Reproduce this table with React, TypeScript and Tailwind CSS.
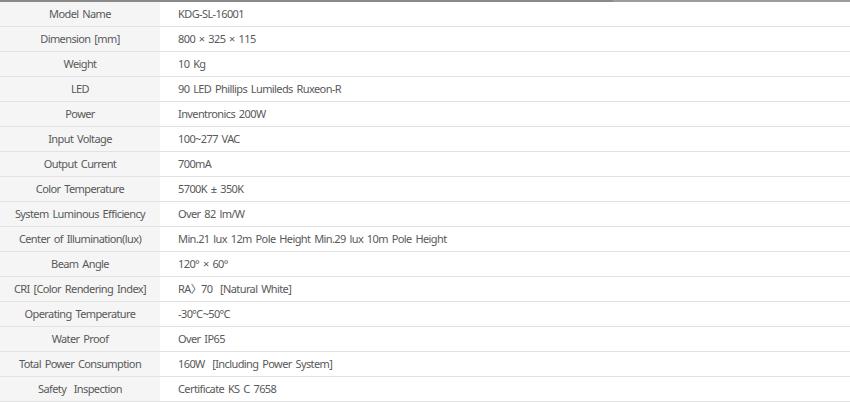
const specs: [string, string][] = [
  ['Model Name', 'KDG-SL-16001'],
  ['Dimension [mm]', '800 × 325 × 115'],
  ['Weight', '10 Kg'],
  ['LED', '90 LED Phillips Lumileds Ruxeon-R'],
  ['Power', 'Inventronics 200W'],
  ['Input Voltage', '100~277 VAC'],
  ['Output Current', '700mA'],
  ['Color Temperature', '5700K ± 350K'],
  ['System Luminous Efficiency', 'Over 82 lm/W'],
  ['Center of Illumination(lux)', 'Min.21 lux 12m Pole Height Min.29 lux 10m Pole Height'],
  ['Beam Angle', '120° × 60°'],
  ['CRI [Color Rendering Index]', 'RA〉70  [Natural White]'],
  ['Operating Temperature', '-30℃~50℃'],
  ['Water Proof', 'Over IP65'],
  ['Total Power Consumption', '160W  [Including Power System]'],
  ['Safety  Inspection', 'Certificate KS C 7658'],
];

export default function App() {
  return (
    <div className="w-[850px] h-[402px] bg-white font-['Noto_Sans','Noto_Sans_CJK_KR',sans-serif] text-[11px] tracking-[-0.6px] [word-spacing:1.5px] text-[#595959]">
      <div className="flex h-[2px]">
        <div className="w-[613px] bg-[#8a8a8a]" />
        <div className="flex-1 bg-[#9c9c9c]" />
      </div>
      {specs.map(([label, value]) => (
        <div key={label} className="flex h-[25px] border-b border-[#e2e2e2]">
          <div className="w-[160px] bg-[#f5f5f5] flex items-center justify-center whitespace-pre">
            {label}
          </div>
          <div className="flex-1 flex items-center pl-[18px] whitespace-pre">{value}</div>
        </div>
      ))}
    </div>
  );
}
